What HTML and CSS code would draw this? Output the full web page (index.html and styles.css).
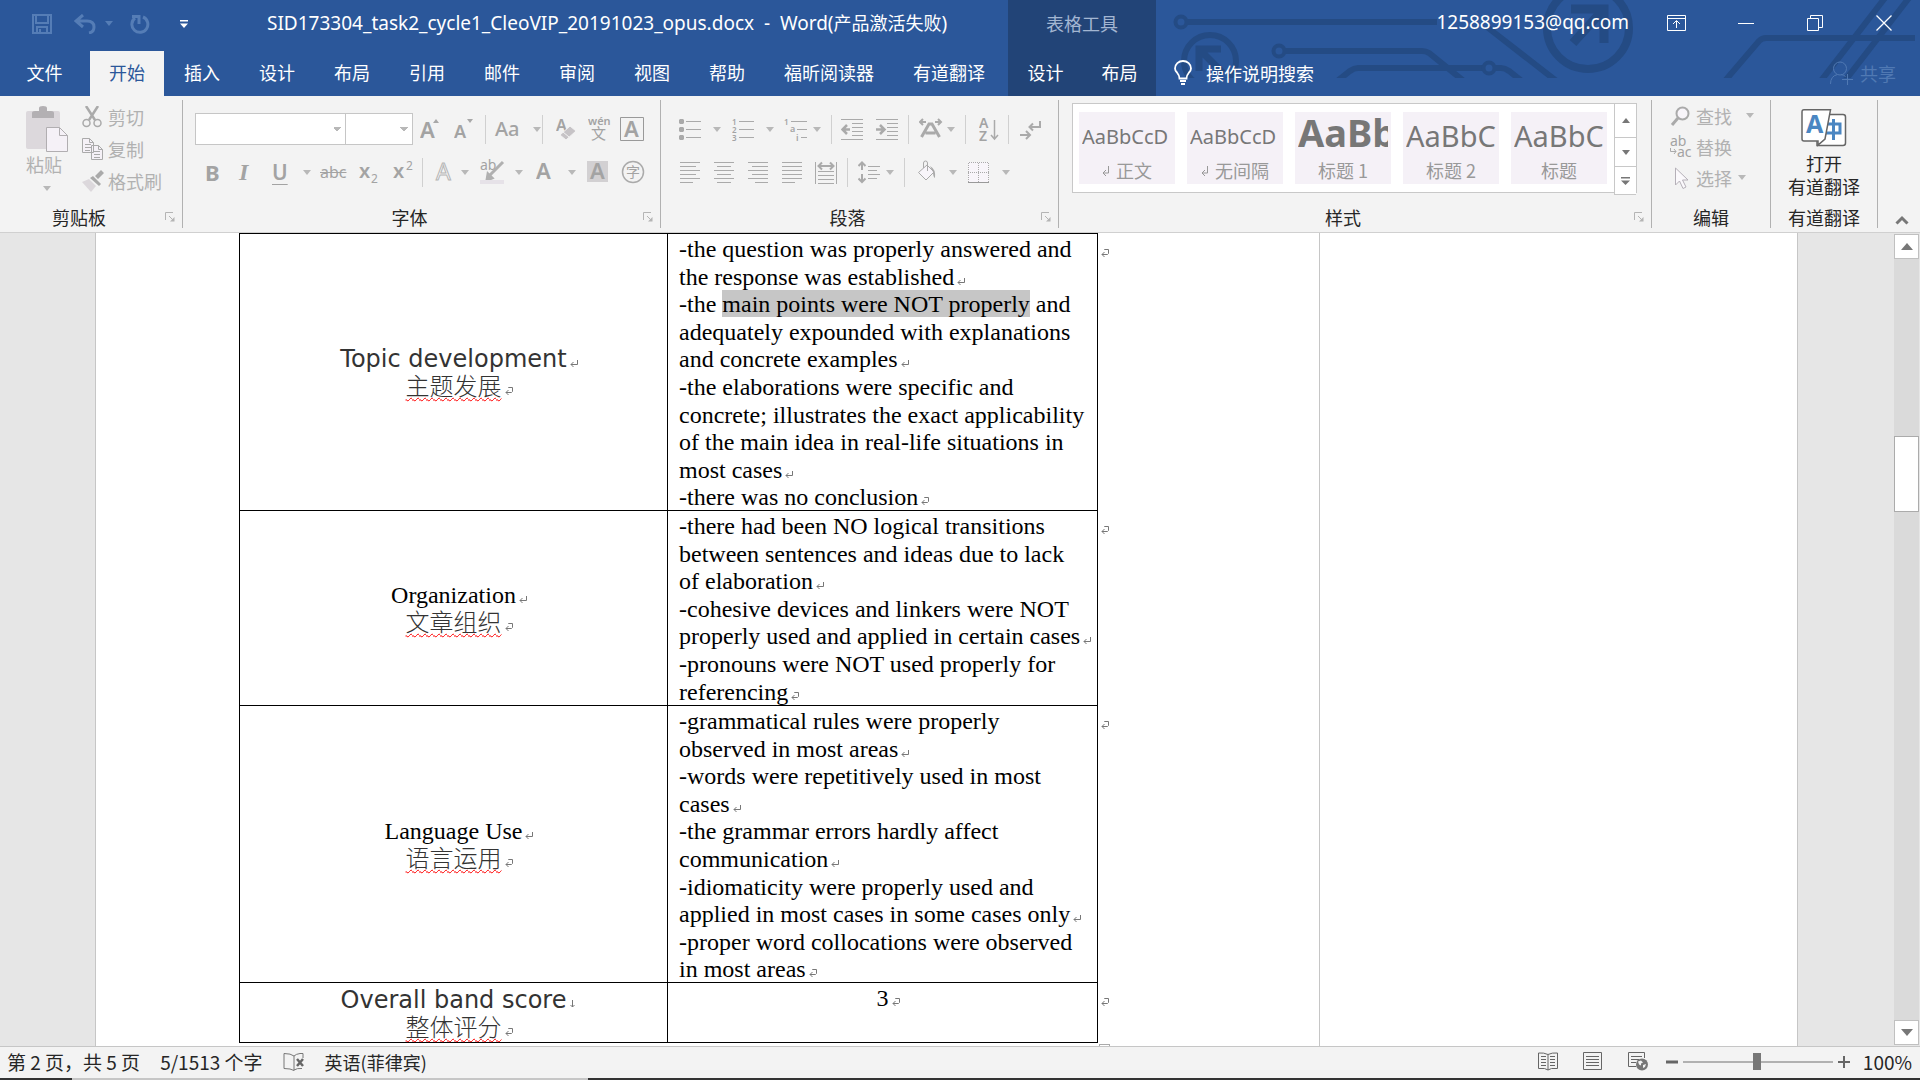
FILE: index.html
```html
<!DOCTYPE html>
<html lang="zh-CN">
<head>
<meta charset="utf-8">
<title>SID173304_task2_cycle1_CleoVIP_20191023_opus.docx - Word</title>
<link rel="stylesheet" href="styles.css">
</head>
<body>
<svg class="defs" aria-hidden="true">
  <symbol id="caret" viewBox="0 0 8 5"><path d="M0 0h8L4 5z" fill="currentColor"/></symbol>
  <symbol id="launch" viewBox="0 0 10 10"><path d="M.5 8V.5H8M4 4l4 4" fill="none" stroke="#b4b4b4"/><path d="M9.500 5v4.500H5z" fill="#b4b4b4"/></symbol>
  <symbol id="ret" viewBox="0 0 8 8"><path d="M7.500 1v4.500H1M3.500 3L1 5.500 3.500 8" fill="none" stroke="#777"/></symbol>
  <symbol id="cellend" viewBox="0 0 8 8"><path d="M3.500 1V.5h4v4L6.500 5.500H1M3.500 3L1 5.500 3.500 8" fill="none" stroke="#777"/></symbol>
</svg>

<header class="header">
  <svg class="art" width="764" height="78" aria-hidden="true">
    <g fill="none" stroke="#244b84" stroke-width="6">
      <circle cx="25" cy="22" r="5.500" stroke-width="4"/><path d="M31 22h250M331 27l72 56"/>
      <circle cx="54" cy="61" r="26"/><path d="M43 71V49h22M45 51l22 22" stroke-width="7"/>
      <circle cx="123" cy="51" r="5.500" stroke-width="4"/><path d="M129 51h137q4 0 7 2l36 29"/>
      <path d="M180 82l14-11q4-3 8-3h125"/><circle cx="333" cy="68" r="5.500" stroke-width="4"/><path d="M339 68h6q4 0 8 3l14 11"/>
      <circle cx="432" cy="28" r="41" stroke-width="8"/><path d="M415 9h33v34M447 10l-30 33" stroke-width="9"/>
      <path d="M568 82l35-41q3-3 7-3h149M664 82L732-6M688 82L756-6"/>
    </g>
  </svg>
  <div class="title">
    <div class="quick">
      <button class="tb" aria-label="保存"><svg width="20" height="20"><path d="M1 1h18v18H1zM4 1v8h12V1M5 19v-6h10v6M8 15v4" fill="none" stroke="currentColor" stroke-width="2"/></svg></button>
      <button class="tb" aria-label="撤消"><svg width="22" height="20"><path d="M9 1L2 7l7 6M2 7h11q7 0 7 6 0 5-5 6" fill="none" stroke="currentColor" stroke-width="3"/></svg></button>
      <button class="tb" aria-label="撤消选项"><svg width="8" height="5"><use href="#caret"/></svg></button>
      <button class="tb" aria-label="重复"><svg width="20" height="20"><path d="M5 4a8 8 0 1 0 8-1M2 2.500h7V10" fill="none" stroke="currentColor" stroke-width="3"/></svg></button>
      <button class="tb on" aria-label="自定义快速访问工具栏"><svg width="8" height="8"><path d="M0 0h8v1.500H0zM0 3.500h8L4 8z" fill="currentColor"/></svg></button>
    </div>
    <h1 class="name"><span class="lat">SID173304_task2_cycle1_CleoVIP_20191023_opus.docx&nbsp; -&nbsp; Word(</span>产品激活失败<span class="lat">)</span></h1>
  </div>
  <div class="ctx-title">表格工具</div>
  <div class="window">
    <span class="lat account">1258899153@qq.com</span>
    <div class="wbtns">
      <button class="wb" aria-label="功能区显示选项"><svg width="20" height="16"><path d="M.5.5h18v15H.5zM.5 3.500h18M9.500 13V6M6 9l3.500-3.500L13 9" fill="none" stroke="#fff"/></svg></button>
      <button class="wb" aria-label="最小化"><svg width="16" height="16"><path d="M0 8.500h16" stroke="#fff"/></svg></button>
      <button class="wb" aria-label="还原"><svg width="16" height="16"><path d="M.5 3.500h11v12H.5zM3.500 3.500v-3h12v12h-4" fill="none" stroke="#fff"/></svg></button>
      <button class="wb" aria-label="关闭"><svg width="16" height="16"><path d="M.5.5l15 15M15.500.5l-15 15" stroke="#fff" stroke-width="1.300"/></svg></button>
    </div>
  </div>
  <nav class="tabs">
    <button class="tab file">文件</button><button class="tab active">开始</button><button class="tab">插入</button><button class="tab">设计</button><button class="tab">布局</button><button class="tab">引用</button><button class="tab">邮件</button><button class="tab">审阅</button><button class="tab">视图</button><button class="tab">帮助</button><button class="tab">福昕阅读器</button><button class="tab">有道翻译</button>
  </nav>
  <nav class="ctx-tabs"><button class="tab">设计</button><button class="tab">布局</button></nav>
  <div class="tell">
    <button class="search"><svg width="18" height="25"><path d="M5.500 18.500q0-3-2.500-6Q1 10.500 1 8.500a8 7.500 0 0 1 16 0q0 2-2 4-2.500 3-2.500 6zM6 21h6M7 24h4" fill="none" stroke="#fff" stroke-width="1.800"/></svg>操作说明搜索</button>
    <button class="share"><svg width="23" height="24"><circle cx="10" cy="7.500" r="6.500" fill="none" stroke="currentColor"/><path d="M.5 23q0-8 7-9.500M11 13.500q3 .5 4.500 2M17.500 13v11M12 18.500h11" fill="none" stroke="currentColor"/></svg>共享</button>
  </div>
</header>

<section class="ribbon">
  <div class="group clip">
    <div class="body clip-body">
      <button class="paste"><svg width="42" height="46"><path d="M0 7q0-2 2-2h30q2 0 2 2v36H2q-2 0-2-2z" fill="#dcd8dc"/><path d="M6 12V7q0-2 3-2h4V2q0-2 4-2t4 2v3h4q3 0 3 2v5z" fill="#b3b0b3"/><path d="M20.500 21.500h13l8 8v16h-21z" fill="#f5f1f7" stroke="#b1aeb1"/><path d="M33.500 21.500v8h8" fill="none" stroke="#b1aeb1"/></svg>粘贴<svg class="caret" width="8" height="5"><use href="#caret"/></svg></button>
      <div class="stack">
        <button class="cmd"><svg width="22" height="22"><path d="M4 0l9 14M16 0L7 14" stroke="#aaa" stroke-width="2.500"/><circle cx="4.500" cy="17" r="3.500" fill="none" stroke="#aaa" stroke-width="1.500"/><circle cx="15.500" cy="17" r="3.500" fill="none" stroke="#aaa" stroke-width="1.500"/></svg>剪切</button>
        <button class="cmd"><svg width="22" height="22"><path d="M.5.5h7l4 4v10H.5zM9.500 7.500h7l4 4v10h-11z" fill="#f5f1f7" stroke="#aaa"/><path d="M7.500.5v4h4M16.500 7.500v4h4M3 6.500h6M3 9.500h6M3 12.500h5M12 13.500h6M12 16.500h6M12 19.500h6" fill="none" stroke="#aaa"/></svg>复制</button>
        <button class="cmd"><svg width="22" height="22"><path d="M0 12l7-3 7 7-5 6z" fill="#dcd8dc"/><path d="M8 8l3-2 8 8-2 2zM13 6l6-6 3 3-6 6z" fill="#aaa"/></svg>格式刷</button>
      </div>
    </div>
    <div class="label"><span>剪贴板</span><button class="launch" aria-label="剪贴板设置"><svg width="10" height="10"><use href="#launch"/></svg></button></div>
  </div>

  <div class="group font">
    <div class="body rows">
      <div class="row f1">
        <select class="combo" aria-label="字体"><option></option></select>
        <select class="combo" aria-label="字号"><option></option></select>
        <button class="ic" aria-label="增大字号"><svg width="22" height="24"><text x="0" y="21" class="g" font-size="22">A</text><path d="M13 6h6l-3-4z" fill="#a8a8a8"/></svg></button>
        <button class="ic" aria-label="减小字号"><svg width="22" height="24"><text x="0" y="21" class="g" font-size="18">A</text><path d="M13 2h6l-3 4z" fill="#a8a8a8"/></svg></button>
        <i class="sep"></i>
        <button class="ic aa" aria-label="更改大小写">Aa</button><svg class="caret" width="8" height="5"><use href="#caret"/></svg>
        <i class="sep"></i>
        <button class="ic" aria-label="清除格式"><svg width="22" height="24"><text x="0" y="14" class="g" font-size="16">A</text><path d="M4 18l10-9 6 5-10 9z" fill="#c6c3c6" stroke="#f3f3f3"/><path d="M7 15l6 5" stroke="#f3f3f3"/></svg></button>
        <button class="ic" aria-label="拼音指南"><svg width="24" height="28"><text x="0" y="10" class="g" font-size="11">wén</text><text x="3" y="24" class="g r" font-size="15">文</text></svg></button>
        <button class="ic" aria-label="字符边框"><svg width="24" height="24"><path d="M.5.500h23v23H.5z" fill="none" stroke="#999"/><text x="4" y="20" class="g" font-size="22">A</text></svg></button>
      </div>
      <div class="row f2">
        <button class="ic b" aria-label="加粗">B</button>
        <button class="ic i" aria-label="倾斜">I</button>
        <button class="ic u" aria-label="下划线">U</button><svg class="caret" width="8" height="5"><use href="#caret"/></svg>
        <button class="ic s" aria-label="删除线">abc</button>
        <button class="ic" aria-label="下标"><svg width="22" height="28"><text x="0" y="20" class="g" font-size="20">x</text><text x="12" y="25" class="g r" font-size="12">2</text></svg></button>
        <button class="ic" aria-label="上标"><svg width="22" height="28"><text x="0" y="20" class="g" font-size="20">x</text><text x="13" y="12" class="g r" font-size="12">2</text></svg></button>
        <i class="sep"></i>
        <button class="ic" aria-label="文本效果"><svg width="20" height="24"><text x="2" y="20" font-size="23" class="o">A</text></svg></button><svg class="caret" width="8" height="5"><use href="#caret"/></svg>
        <button class="ic" aria-label="突出显示"><svg width="26" height="26"><text x="0" y="11" class="g r" font-size="14">ab</text><path d="M23 3L10 16M8 15l4 4-5 2z" stroke="#b0b0b0" stroke-width="3" fill="#b0b0b0"/><path d="M0 21h24v4H0z" fill="#e6e2e8"/></svg></button><svg class="caret" width="8" height="5"><use href="#caret"/></svg>
        <button class="ic" aria-label="字体颜色"><svg width="20" height="24"><text x="0" y="19" class="g" font-size="22">A</text></svg></button><svg class="caret" width="8" height="5"><use href="#caret"/></svg>
        <button class="ic" aria-label="字符底纹"><svg width="22" height="24"><path d="M0 1h21v21H0z" fill="#d2d0d2"/><text x="3" y="19" class="g" font-size="22">A</text></svg></button>
        <button class="ic" aria-label="带圈字符"><svg width="24" height="24"><circle cx="12" cy="12" r="10.500" fill="none" stroke="#aaa" stroke-width="1.500"/><text x="5" y="17" class="g r" font-size="14">字</text></svg></button>
      </div>
    </div>
    <div class="label"><span>字体</span><button class="launch" aria-label="字体设置"><svg width="10" height="10"><use href="#launch"/></svg></button></div>
  </div>

  <div class="group para">
    <div class="body rows">
      <div class="row p1">
        <button class="ic" aria-label="项目符号"><svg width="24" height="24"><path d="M7 4.500h15M7 12.500h15M7 20.500h15" stroke="#aaa"/><path d="M1 2h3l1 1v3l-1 1H1L0 6V3zM1 10h3l1 1v3l-1 1H1l-1-1v-3zM1 18h3l1 1v3l-1 1H1l-1-1v-3z" fill="#aaa"/></svg></button><svg class="caret" width="8" height="5"><use href="#caret"/></svg>
        <button class="ic" aria-label="编号"><svg width="24" height="24"><path d="M7 4.500h15M7 12.500h15M7 20.500h15" stroke="#aaa"/><text x="0" y="8" class="g" font-size="8">1</text><text x="0" y="16" class="g" font-size="8">2</text><text x="0" y="24" class="g" font-size="8">3</text></svg></button><svg class="caret" width="8" height="5"><use href="#caret"/></svg>
        <button class="ic" aria-label="多级列表"><svg width="24" height="24"><path d="M7 4.500h16M13 12.500h10M17 20.500h6" stroke="#aaa"/><text x="0" y="8" class="g" font-size="8">1</text><text x="6" y="15" class="g" font-size="9">a</text><text x="12" y="24" class="g" font-size="9">i</text></svg></button><svg class="caret" width="8" height="5"><use href="#caret"/></svg>
        <i class="sep"></i>
        <button class="ic" aria-label="减少缩进量"><svg width="24" height="24"><path d="M0 2.500h22M11 6.500h11M11 10.500h11M11 14.500h11M11 18.500h11M0 22.500h22" stroke="#aaa"/><path d="M9 12.500H2M6 8l-4.500 4.500L6 17" fill="none" stroke="#aaa" stroke-width="2.500"/></svg></button>
        <button class="ic" aria-label="增加缩进量"><svg width="24" height="24"><path d="M0 2.500h22M11 6.500h11M11 10.500h11M11 14.500h11M11 18.500h11M0 22.500h22" stroke="#aaa"/><path d="M0 12.500h7M4 8l4.500 4.500L4 17" fill="none" stroke="#aaa" stroke-width="2.500"/></svg></button>
        <i class="sep"></i>
        <button class="ic" aria-label="中文版式"><svg width="24" height="24"><path d="M7 5H1M4 2L1 5l3 3M16 5h6M19 2l3 3-3 3" fill="none" stroke="#aaa" stroke-width="2"/><path d="M2.500 20L10 7h3l7.500 13M6.500 16h10" fill="none" stroke="#aaa" stroke-width="3"/></svg></button><svg class="caret" width="8" height="5"><use href="#caret"/></svg>
        <i class="sep"></i>
        <button class="ic" aria-label="排序"><svg width="20" height="24"><text x="0" y="11" class="g" font-size="14">A</text><text x="0" y="24" class="g" font-size="14">Z</text><path d="M15.500 3v19M12 18l3.500 4 3.500-4" fill="none" stroke="#aaa" stroke-width="1.500"/></svg></button>
        <i class="sep"></i>
        <button class="ic" aria-label="显示编辑标记"><svg width="22" height="24"><path d="M20 4v6H10M13 6.500L9.500 10l3.500 3.500M0 18h9M6 14l4 4-4 4" fill="none" stroke="#aaa" stroke-width="2"/></svg></button>
      </div>
      <div class="row p2">
        <button class="ic" aria-label="左对齐"><svg width="22" height="24"><path d="M0 2.500h20M0 6.500h16M0 10.500h20M0 14.500h16M0 18.500h20M0 22.500h13" stroke="#aaa"/></svg></button>
        <button class="ic" aria-label="居中"><svg width="22" height="24"><path d="M0 2.500h20M3 6.500h14M0 10.500h20M3 14.500h14M0 18.500h20M3 22.500h14" stroke="#aaa"/></svg></button>
        <button class="ic" aria-label="右对齐"><svg width="22" height="24"><path d="M0 2.500h20M4 6.500h16M0 10.500h20M4 14.500h16M0 18.500h20M7 22.500h13" stroke="#aaa"/></svg></button>
        <button class="ic" aria-label="两端对齐"><svg width="22" height="24"><path d="M0 2.500h20M0 6.500h20M0 10.500h20M0 14.500h20M0 18.500h20M0 22.500h13" stroke="#aaa"/></svg></button>
        <button class="ic" aria-label="分散对齐"><svg width="22" height="24"><path d="M.5 2v22M21.500 2v22M3 11.500h16M3 15.500h16M3 19.500h16M3 23.500h16" stroke="#aaa"/><path d="M4 6h14M7 2.500L3.500 6 7 9.500M15 2.500L18.500 6 15 9.500" fill="none" stroke="#aaa" stroke-width="2"/></svg></button>
        <i class="sep"></i>
        <button class="ic" aria-label="行距"><svg width="24" height="24"><path d="M10 6.500h12M10 10.500h9M10 14.500h12M10 18.500h9" stroke="#aaa"/><path d="M4 3v7M4 14v8M.5 6L4 2.500 7.500 6M.5 18.500L4 22l3.500-3.500" fill="none" stroke="#aaa" stroke-width="2"/></svg></button><svg class="caret" width="8" height="5"><use href="#caret"/></svg>
        <i class="sep"></i>
        <button class="ic" aria-label="底纹"><svg width="20" height="24"><path d="M.5 12.500L9 5l7 7-8 8z" fill="#f8f5fa" stroke="#aaa"/><path d="M5.500 8V3q0-2 2-2t2 2v8" fill="none" stroke="#aaa"/><path d="M12 6q6 3 5 12-2-1-2-6z" fill="#aaa"/></svg></button><svg class="caret" width="8" height="5"><use href="#caret"/></svg>
        <button class="ic" aria-label="边框"><svg width="22" height="24"><path d="M0 2h21v20H0z" fill="#f8f5fa"/><path d="M.5 22V2.500h20V22M10.500 3v19M0 12.500h21" fill="none" stroke="#aaa" stroke-dasharray="1 1"/><path d="M0 22.500h21" stroke="#999"/></svg></button><svg class="caret" width="8" height="5"><use href="#caret"/></svg>
      </div>
    </div>
    <div class="label"><span>段落</span><button class="launch" aria-label="段落设置"><svg width="10" height="10"><use href="#launch"/></svg></button></div>
  </div>

  <div class="group styles">
    <div class="body">
      <div class="gallery">
        <div class="cells">
          <button class="style"><span class="pv">AaBbCcD</span><span class="nm"><svg width="8" height="14"><path d="M6.500 3v7H1M4 7l-3 3 3 3" fill="none" stroke="#999"/></svg> 正文</span></button>
          <button class="style"><span class="pv">AaBbCcD</span><span class="nm"><svg width="8" height="14"><path d="M6.500 3v7H1M4 7l-3 3 3 3" fill="none" stroke="#999"/></svg> 无间隔</span></button>
          <button class="style"><span class="pv h1">AaBb</span><span class="nm">标题 1</span></button>
          <button class="style"><span class="pv h2">AaBbC</span><span class="nm">标题 2</span></button>
          <button class="style"><span class="pv h2">AaBbC</span><span class="nm">标题</span></button>
        </div>
        <div class="gscroll">
          <button aria-label="上一行"><svg width="8" height="5"><path d="M0 5h8L4 0z" fill="#777"/></svg></button>
          <button aria-label="下一行"><svg width="8" height="5"><path d="M0 0h8L4 5z" fill="#777"/></svg></button>
          <button aria-label="其他"><svg width="9" height="9"><path d="M0 0h9v1.500H0zM0 3.500h9L4.500 8z" fill="#777"/></svg></button>
        </div>
      </div>
    </div>
    <div class="label"><span>样式</span><button class="launch" aria-label="样式设置"><svg width="10" height="10"><use href="#launch"/></svg></button></div>
  </div>

  <div class="group edit">
    <div class="body stack">
      <button class="cmd"><svg width="22" height="22"><circle cx="12.500" cy="8.500" r="6" fill="#f8f5fa" stroke="#aaa" stroke-width="2"/><path d="M8 13l-6 7" stroke="#aaa" stroke-width="3"/></svg>查找<svg class="caret far" width="8" height="5"><use href="#caret"/></svg></button>
      <button class="cmd"><svg width="24" height="24"><text x="0" y="11" class="g r" font-size="14">ab</text><text x="7" y="22" class="g r" font-size="14">ac</text><path d="M.5 13v3.500H6M4 14l2 2.500-2 2.500" fill="none" stroke="#aaa"/></svg>替换</button>
      <button class="cmd"><svg width="22" height="22"><path d="M5.500 1v17l4-4 3.500 7.500 3-1.500-3.500-7h5.500z" fill="#fbf9fc" stroke="#b5b0b8"/></svg>选择<svg class="caret" width="8" height="5"><use href="#caret"/></svg></button>
    </div>
    <div class="label"><span>编辑</span></div>
  </div>

  <div class="group youdao">
    <div class="body">
      <button class="trans"><svg width="46" height="38"><path d="M28 5.500h14q2.500 0 2.500 2.500v26q0 2.500-2.500 2.500H16V32" fill="#fff" stroke="#666" stroke-width="1.500"/><path d="M26 15h13v9H25M32.500 10v21" fill="none" stroke="#4a86c2" stroke-width="3"/><path d="M3 .8h26.500L24 30l-7 6v-4H3Q1 32 1 30V3Q1 .8 3 .8z" fill="#fff" stroke="#666" stroke-width="1.500"/><text x="5" y="24" font-size="25" font-weight="700" fill="#4a86c2">A</text></svg><span>打开<br>有道翻译</span></button>
    </div>
    <div class="label"><span>有道翻译</span></div>
  </div>
  <div class="tail"><button aria-label="折叠功能区"><svg width="14" height="10"><path d="M1.500 8.500L7 3l5.500 5.500" fill="none" stroke="#777" stroke-width="3"/></svg></button></div>
</section>

<main class="doc">
  <article class="page">
    <table class="rubric">
      <colgroup><col class="c1"><col class="c2"><col class="c3"></colgroup>
      <tbody>
      <tr class="tall">
        <th scope="row"><span class="vd">Topic development<svg class="m"><use href="#ret"/></svg></span><span class="zh"><u>主题发展</u><svg class="m"><use href="#cellend"/></svg></span></th>
        <td><p>-the question was properly answered and the response was established<svg class="m"><use href="#ret"/></svg></p><p>-the <mark>main points were NOT properly</mark> and adequately expounded with explanations and concrete examples<svg class="m"><use href="#ret"/></svg></p><p>-the elaborations were specific and concrete; illustrates the exact applicability of the main idea in real-life situations in most cases<svg class="m"><use href="#ret"/></svg></p><p>-there was no conclusion<svg class="m"><use href="#cellend"/></svg></p></td>
        <td class="end"><svg class="m"><use href="#cellend"/></svg></td>
      </tr>
      <tr class="mid">
        <th scope="row"><span class="tm">Organization<svg class="m"><use href="#ret"/></svg></span><span class="zh"><u>文章组织</u><svg class="m"><use href="#cellend"/></svg></span></th>
        <td><p>-there had been NO logical transitions between sentences and ideas due to lack of elaboration<svg class="m"><use href="#ret"/></svg></p><p>-cohesive devices and linkers were NOT properly used and applied in certain cases<svg class="m"><use href="#ret"/></svg></p><p>-pronouns were NOT used properly for referencing<svg class="m"><use href="#cellend"/></svg></p></td>
        <td class="end"><svg class="m"><use href="#cellend"/></svg></td>
      </tr>
      <tr class="tall">
        <th scope="row"><span class="tm">Language Use<svg class="m"><use href="#ret"/></svg></span><span class="zh"><u>语言运用</u><svg class="m"><use href="#cellend"/></svg></span></th>
        <td><p>-grammatical rules were properly observed in most areas<svg class="m"><use href="#ret"/></svg></p><p>-words were repetitively used in most cases<svg class="m"><use href="#ret"/></svg></p><p>-the grammar errors hardly affect communication<svg class="m"><use href="#ret"/></svg></p><p>-idiomaticity were properly used and applied in most cases in some cases only<svg class="m"><use href="#ret"/></svg></p><p>-proper word collocations were observed in most areas<svg class="m"><use href="#cellend"/></svg></p></td>
        <td class="end"><svg class="m"><use href="#cellend"/></svg></td>
      </tr>
      <tr class="last">
        <th scope="row"><span class="vd">Overall band score<svg class="m" viewBox="0 0 8 8"><path d="M3.500 0v7M1.500 5l2 2 2-2" fill="none" stroke="#777"/></svg></span><span class="zh"><u>整体评分</u><svg class="m"><use href="#cellend"/></svg></span></th>
        <td class="score">3<svg class="m"><use href="#cellend"/></svg></td>
        <td class="end"><svg class="m"><use href="#cellend"/></svg></td>
      </tr>
      </tbody>
    </table>
    <div class="handle"></div>
  </article>
  <aside class="comments"></aside>
  <div class="gutter"></div>
  <div class="vscroll">
    <button aria-label="向上滚动"><svg width="12" height="7"><path d="M0 7h12L6 0z" fill="#777"/></svg></button>
    <i class="before"></i><div class="thumb"></div><i class="after"></i>
    <button aria-label="向下滚动"><svg width="12" height="7"><path d="M0 0h12L6 7z" fill="#777"/></svg></button>
  </div>
</main>

<footer class="status">
  <div class="left">
    <span class="num">第 2 页，共 5 页</span><span class="num">5/1513 个字</span>
    <svg width="22" height="18"><path d="M11 3Q8 .5 1 .5v15q7 0 10 2M11 3q2-2 6-2.500h3V5M11 3v14.500M11 17q3-2 8-1.500" fill="none" stroke="#777"/><path d="M14 6l6 7M20 6l-6 7" stroke="#666" stroke-width="2.500"/></svg>
    <span class="lang">英语(菲律宾)</span>
  </div>
  <div class="right">
    <button aria-label="阅读视图"><svg width="20" height="19"><path d="M10 2.500Q6 .5.500 1v15.500h6L10 18l3.500-1.500h6V1Q14 .5 10 2.500V18M3 4.500h5M3 7.500h5M3 10.500h5M3 13.500h5M12 4.500h5M12 7.500h5M12 10.500h5M12 13.500h5" fill="none" stroke="#666"/></svg></button>
    <button aria-label="页面视图"><svg width="20" height="19"><path d="M.5.500h18v17H.500zM3 4.500h13M3 7.500h13M3 10.500h13M3 13.500h13" fill="none" stroke="#666"/></svg></button>
    <button aria-label="Web 版式"><svg width="21" height="19"><path d="M8 14.500H.500V.500h16V6M3 4.500h11M3 7.500h8M3 10.500h5" fill="none" stroke="#666"/><circle cx="14" cy="12.500" r="6" fill="#777"/><path d="M10 9.500l3-1 2 2-2 1v2l-2-1zM15 13l3-1-1 3-2 1z" fill="#f3f3f3"/></svg></button>
    <div class="zoom">
      <button aria-label="缩小"><svg width="12" height="12"><path d="M0 6h12" stroke="#666" stroke-width="3"/></svg></button>
      <input type="range" min="0" max="200" value="99" aria-label="显示比例">
      <button aria-label="放大"><svg width="12" height="12"><path d="M0 6h12M6 0v12" stroke="#666" stroke-width="2"/></svg></button>
    </div>
    <span class="pct num">100%</span>
  </div>
</footer>
<div class="taskbar"><i class="on"></i><i class="lit"></i><i class="rest"></i></div>
</body>
</html>
```
FILE: styles.css
```css
* { box-sizing: border-box; }
body {
  margin: 0;
  height: 100vh;
  overflow: hidden;
  display: flex;
  flex-direction: column;
  font: 18px/24px "Noto Sans CJK SC", "Noto Sans", sans-serif;
  color: #262626;
  background: #e6e6e6;
}
button {
  font: inherit;
  color: inherit;
  background: none;
  border: 0;
  padding: 0;
  margin: 0;
}
svg { display: block; flex: none; }
svg text { pointer-events: none; }
.defs { position: absolute; width: 0; height: 0; }
.lat { font-family: "Noto Sans", sans-serif; font-size: 19px; }

/* header */
.header {
  position: relative;
  display: grid;
  grid-template-columns: 1008px 148px 1fr;
  grid-template-rows: 51px 45px;
  background: #2b579a;
  color: #fff;
}
.art { position: absolute; right: 0; top: 0; }
.title { display: flex; align-items: center; padding-bottom: 4px; }
.quick {
  display: grid;
  grid-template-columns: 42px 31px 25px 50px 20px;
  align-items: center;
  padding-left: 32px;
  color: #557db6;
}
.quick .on { color: #fff; }
.name {
  flex: 1;
  margin: 0;
  padding: 0 0 2px 67px;
  font-size: 18px;
  font-weight: 400;
  white-space: nowrap;
}
.ctx-title, .ctx-tabs { background: #224477; }
.ctx-title {
  display: flex;
  align-items: center;
  justify-content: center;
  padding-bottom: 6px;
  color: #a3b6d2;
}
.window {
  position: relative;
  display: flex;
  align-items: center;
  justify-content: flex-end;
  padding: 0 28px 6px 0;
}
.account { margin-right: 38px; padding-bottom: 2px; }
.wbtns { display: grid; grid-template-columns: 71px 69px 69px 16px; align-items: center; }
.tabs, .ctx-tabs { display: flex; }
.tabs { gap: 1px; }
.tab { padding: 0 19px 4px; white-space: nowrap; }
.tab.file { padding: 0 26px 4px; width: 89px; }
.tab.active { background: #f3f3f3; color: #2b579a; }
.ctx-tabs { gap: 1px; justify-content: center; }
.ctx-tabs .tab { padding: 0 18px 4px 19px; }
.tell {
  position: relative;
  display: flex;
  justify-content: space-between;
  align-items: center;
  padding: 0 24px 2px 18px;
}
.search, .share { display: flex; align-items: center; height: 43px; }
.search { gap: 14px; }
.share { gap: 7px; color: #5079b3; }

/* ribbon */
.ribbon {
  display: flex;
  height: 137px;
  background: #f3f3f3;
  border-bottom: 1px solid #d0d0d0;
  padding: 4px 0;
}
.group {
  display: flex;
  flex-direction: column;
  border-right: 1px solid #b1b1b1;
}
.clip { width: 183px; }
.font { width: 478px; }
.para { width: 398px; }
.styles { flex: 1; min-width: 0; }
.edit { width: 119px; }
.youdao { width: 107px; }
.body { height: 106px; color: #b1b1b1; }
.label { display: flex; align-items: center; height: 22px; padding-right: 7px; }
.label span { flex: 1; text-align: center; }
.label span:last-child { margin-right: -7px; }
.label .launch { width: 17px; display: flex; justify-content: flex-end; }
.tail { width: 42px; display: flex; align-items: flex-end; justify-content: flex-end; padding: 0 11px 3px 0; }
.caret { color: #b8b8b8; }
.clip-body { display: flex; padding: 6px 0 0 26px; }
.clip-body .stack { margin-top: -5px; }
.paste { display: flex; flex-direction: column; align-items: flex-start; width: 56px; line-height: 25px; }
.paste .caret { margin: 9px 0 0 17px; }
.stack { display: flex; flex-direction: column; }
.cmd { display: flex; align-items: center; height: 32px; white-space: nowrap; }
.cmd svg:first-child { width: 24px; margin-right: 2px; }
.edit .stack { padding-left: 18px; }
.edit .cmd { height: 31px; }
.edit .caret { margin-left: 6px; }
.edit .caret.far { margin-left: 14px; }
.rows { display: flex; flex-direction: column; gap: 9px; padding-top: 12px; }
.row { display: grid; height: 34px; align-items: center; justify-items: start; }
.sep { width: 1px; height: 29px; background: #d0d0d0; }
.ic { line-height: 24px; color: #a3a3a3; font-family: "Noto Sans", sans-serif; }
.g { font-family: "Noto Sans", "Noto Sans CJK SC", sans-serif; font-weight: 600; fill: #a3a3a3; }
.g.r { font-weight: 400; }
.o { font-family: "Noto Sans", sans-serif; fill: #f8f8f8; stroke: #b5b5b5; }
.f1 { padding-left: 12px; grid-template-columns: 150px 75px 34px 31px 10px 38px 9px 14px 32px 32px 24px; }
.f2 { padding-left: 22px; grid-template-columns: 34px 33px 31px 17px 39px 34px 29px 12px 27px 19px 35px 21px 32px 19px 34px 24px; }
.p1 { padding-left: 18px; grid-template-columns: 34px 19px 34px 18px 29px 18px 10px 35px 32px 11px 28px 18px 14px 29px 12px 24px; }
.p2 { padding-left: 19px; grid-template-columns: 34px 34px 34px 33px 32px 11px 28px 18px 14px 31px 19px 34px 10px; }
.combo {
  width: 151px;
  height: 32px;
  appearance: none;
  border: 1px solid #c6c6c6;
  border-radius: 0;
  background: linear-gradient(45deg, transparent 50%, #b8b8b8 50%) no-repeat right 8px center / 4px 4px,
    linear-gradient(-45deg, transparent 50%, #b8b8b8 50%) no-repeat right 4px center / 4px 4px, #fff;
}
.combo + .combo { width: 68px; }
.aa { font-size: 20px; font-weight: 500; }
.b { font-size: 22px; font-weight: 700; }
.i { font: italic 700 24px/24px "Liberation Serif", serif; }
.u { font-size: 21px; font-weight: 600; text-decoration: underline 1px; text-underline-offset: 4px; }
.s { font-size: 16px; text-decoration: line-through; }
.gallery {
  display: flex;
  justify-content: space-between;
  margin: 3px 14px 0 13px;
  height: 90px;
  background: #fff;
  border: 1px solid #c8c8c8;
}
.cells { display: flex; gap: 12px; padding: 8px 6px; overflow: hidden; }
.style {
  display: flex;
  flex-direction: column;
  width: 96px;
  height: 72px;
  padding: 0 3px;
  background: #f5f1f7;
  color: #999;
}
.pv {
  width: 90px;
  height: 48px;
  line-height: 50px;
  overflow: hidden;
  white-space: nowrap;
  text-align: left;
  font-family: "Noto Sans", sans-serif;
  font-size: 20px;
  color: #777;
}
.pv.h2 { font-size: 29px; line-height: 48px; }
.pv.h1 { font-size: 38px; font-weight: 700; line-height: 40px; }
.nm { display: flex; align-items: center; justify-content: center; gap: 6px; width: 90px; line-height: 20px; white-space: nowrap; }
.gscroll {
  display: grid;
  grid-template-rows: 33px 29px 29px;
  width: 22px;
  height: 91px;
  border-left: 1px solid #c8c8c8;
  border-bottom: 1px solid #c8c8c8;
  background: #fff;
}
.gscroll button { display: flex; align-items: center; justify-content: center; }
.gscroll button + button { border-top: 1px solid #c8c8c8; }
.trans {
  display: flex;
  flex-direction: column;
  align-items: center;
  width: 100%;
  padding-top: 9px;
  gap: 6px;
  line-height: 23px;
  color: #262626;
  font-family: "Noto Sans", "Noto Sans CJK SC", sans-serif;
}

/* document */
.doc { flex: 1; min-height: 0; display: flex; overflow: hidden; }
.page { flex: 1; margin-left: 95px; border-left: 1px solid #c6c6c6; background: #fff; overflow: hidden; }
.comments { width: 479px; border: 1px solid #c6c6c6; border-width: 0 1px; background: #fff; }
.gutter { width: 96px; }
.rubric {
  width: 874px;
  margin-left: 143px;
  border-collapse: collapse;
  table-layout: fixed;
  font: 24px/1.15 "Liberation Serif", serif;
  color: #000;
}
.c1 { width: 428px; }
.c2 { width: 430px; }
.c3 { width: 16px; }
.rubric th, .rubric td { border: 1px solid #000; padding: 0 11px; }
.rubric td { padding-top: 2px; text-align: left; vertical-align: top; }
.rubric th { font-weight: 400; line-height: 26px; vertical-align: middle; }
.rubric p { margin: 0; }
.rubric p:last-child { margin-bottom: -2px; }
.rubric td.end { border: 0; padding: 2px 0 0; }
.rubric td.score { text-align: center; }
.tall { height: 277px; }
.mid { height: 195px; }
.last { height: 60px; }
.vd, .tm, .zh { display: block; }
.vd { font-family: "DejaVu Sans", sans-serif; color: #333; }
.zh { font-family: "Noto Sans CJK SC", sans-serif; font-weight: 300; color: #333; }
.zh u { text-decoration: underline wavy #f00 1px; text-underline-offset: 2px; }
.m { display: inline-block; width: 8px; height: 8px; margin: 0 -11px 0 3px; }
mark { padding-top: 1px; background: #c6c6c6; color: inherit; }
.handle { width: 11px; height: 11px; margin: 1px 0 0 1003px; border: 1px solid #aaa; }
.vscroll { width: 25px; margin: 1px 1px 1px 0; display: flex; flex-direction: column; background: #dadada; }
.vscroll button {
  display: flex;
  align-items: center;
  justify-content: center;
  height: 25px;
  background: #fff;
  border: 1px solid #c0c0c0;
}
.before { flex: 177; }
.after { flex: 509; }
.thumb { height: 76px; background: #fff; border: 1px solid #ababab; }

/* status bar */
.status {
  display: flex;
  justify-content: space-between;
  align-items: center;
  height: 32px;
  padding: 0 8px 2px 7px;
  border-top: 1px solid #c6c6c6;
  background: #f3f3f3;
  white-space: nowrap;
}
.left, .right, .zoom { display: flex; align-items: center; }
.left { gap: 20px; }
.num { font-size: 19px; }
.right { gap: 25px; }
.zoom { gap: 5px; margin-left: -8px; }
.zoom input {
  appearance: none;
  width: 150px;
  height: 18px;
  margin: 0;
  background: linear-gradient(#b1b1b1, #b1b1b1) no-repeat center / 100% 2px;
}
.zoom input::-webkit-slider-thumb { appearance: none; width: 8px; height: 17px; background: #777; }
.pct { margin-left: -12px; }
.taskbar { display: flex; height: 2px; }
.taskbar .on { width: 72px; background: #333; }
.taskbar .lit { width: 516px; background: #c6c6c6; }
.taskbar .rest { flex: 1; background: #333; }
```
